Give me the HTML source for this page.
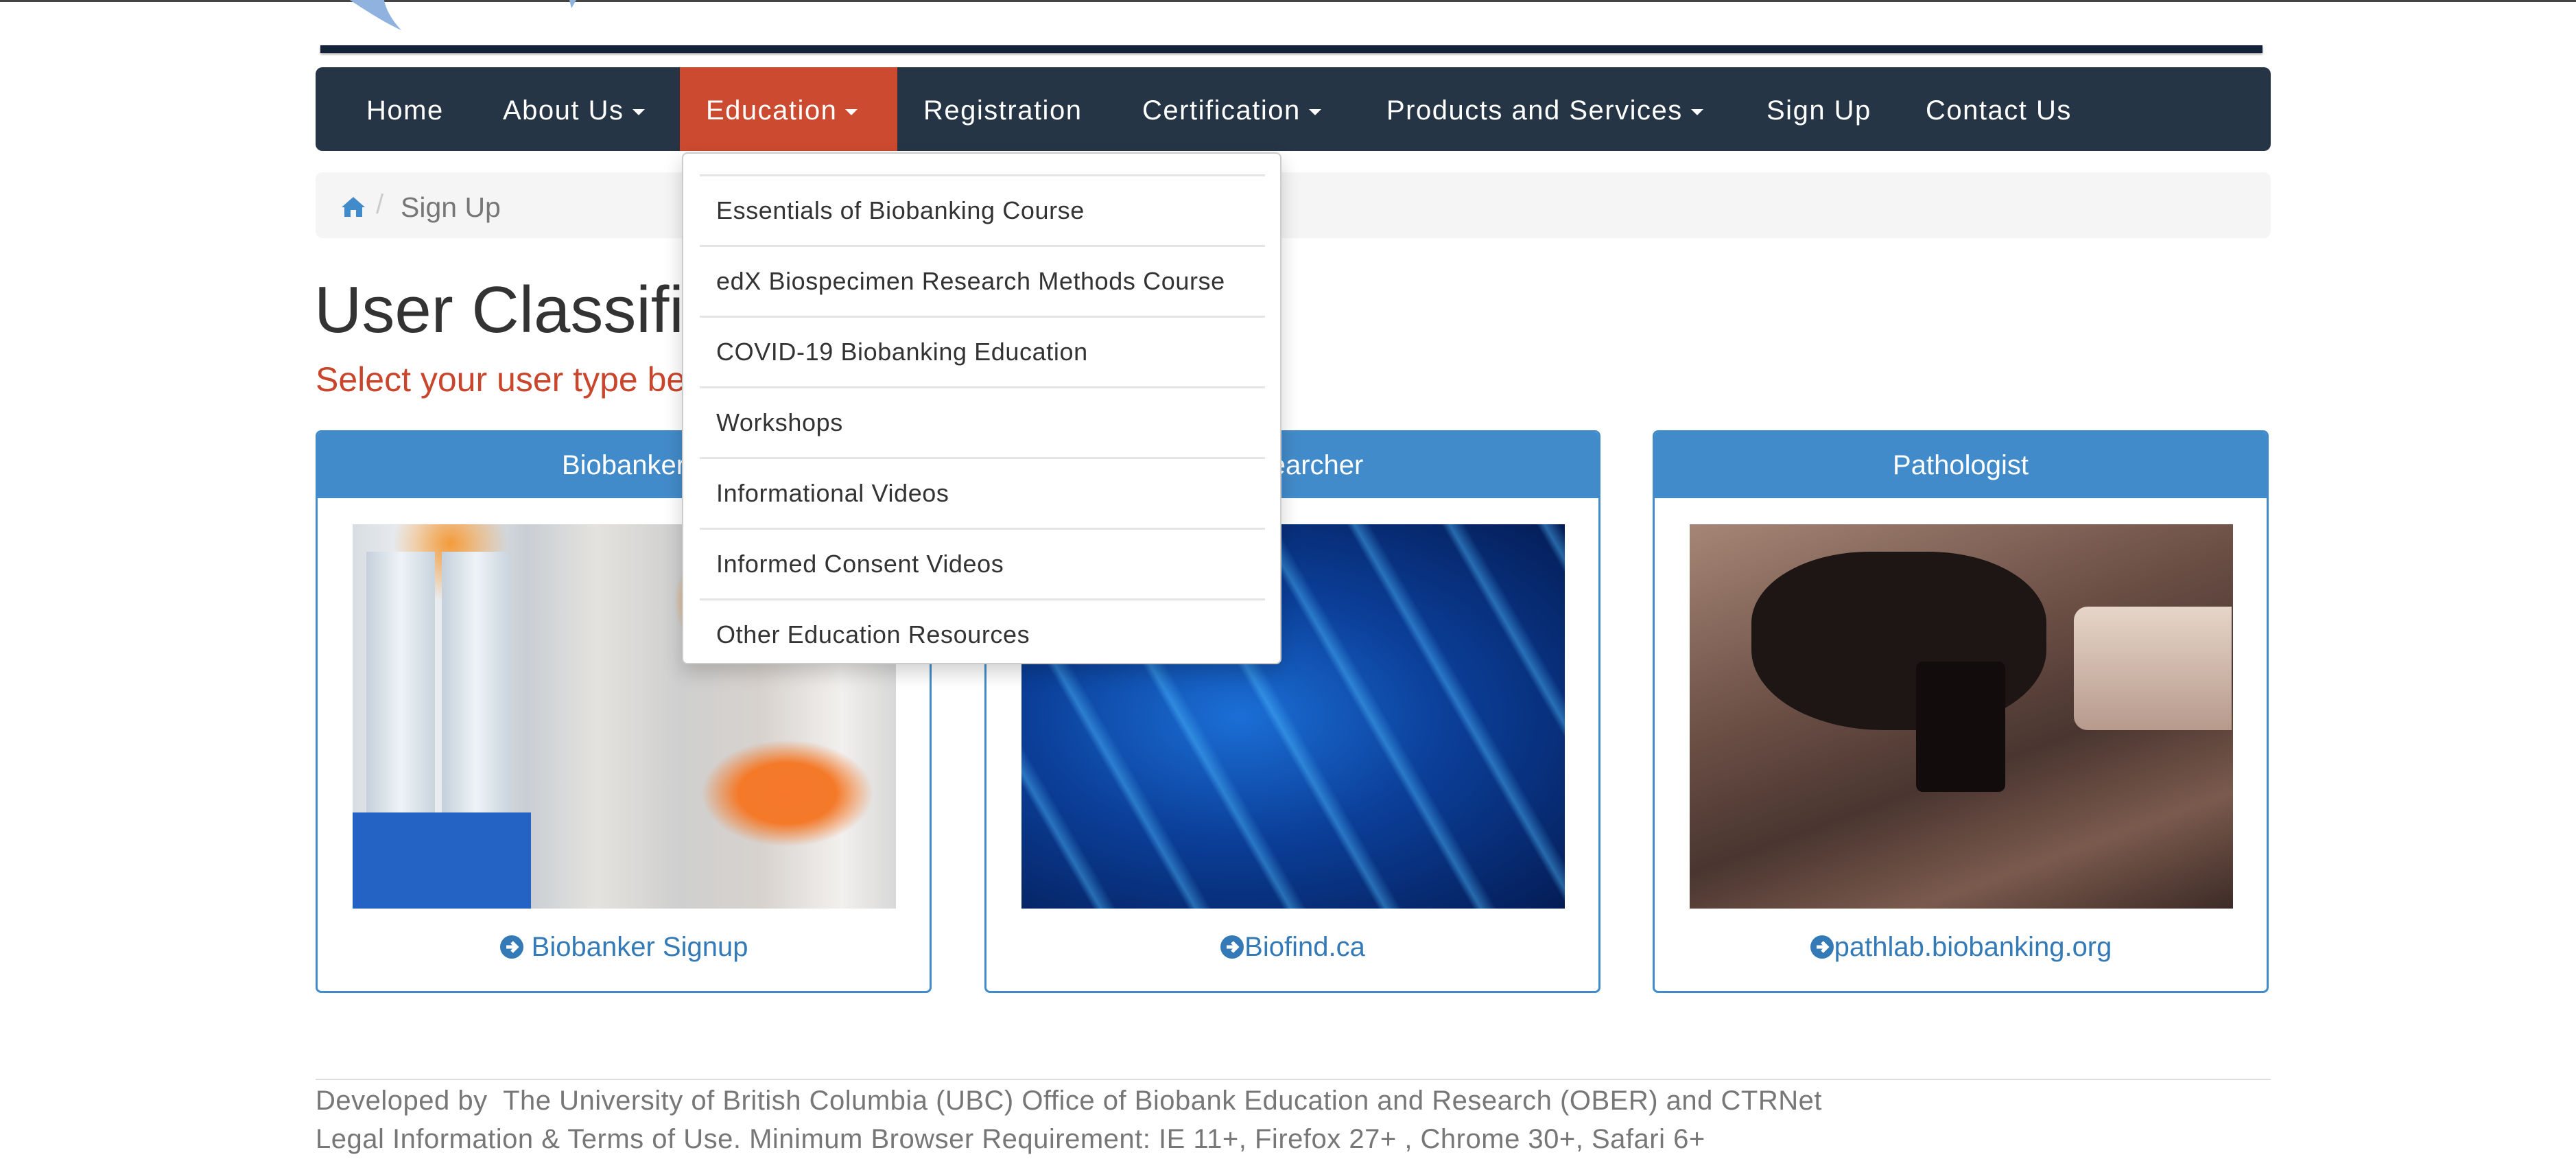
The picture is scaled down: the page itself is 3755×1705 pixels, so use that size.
<!DOCTYPE html>
<html><head><meta charset="utf-8"><style>
*{box-sizing:border-box;margin:0;padding:0}
body{width:3755px;height:1705px;background:#fff;position:relative;overflow:hidden;font-family:"Liberation Sans",sans-serif}
.a{position:absolute;white-space:nowrap}
.nav{left:460px;top:98px;width:2850px;height:122px;background:#263545;border-radius:10px}
.ni{top:100px;height:122px;line-height:122px;color:#fff;font-size:40px;letter-spacing:1.5px}
.car{display:inline-block;border-left:9px solid transparent;border-right:9px solid transparent;border-top:9px solid #fff;vertical-align:middle;margin-left:12px}
.card{width:898px;height:820px;top:627px;border:3px solid #428bca;border-radius:8px;overflow:hidden}
.ch{height:96px;background:#428bca;color:#fff;font-size:40px;text-align:center;line-height:96px}
.img{position:absolute;left:51px;top:134px;width:792px;height:560px}
.lk{position:absolute;left:0;width:100%;top:728px;text-align:center;color:#337ab7;font-size:40px}
.lk svg{vertical-align:-5px}
.dd{left:994px;top:222px;width:874px;height:746px;background:#fff;border:2px solid #ccc;border-radius:8px;box-shadow:0 12px 28px rgba(0,0,0,.18);z-index:5}
.di{position:absolute;left:24px;width:824px;border-top:3px solid #e5e5e5;height:103px;line-height:100px;padding-left:24px;font-size:36px;color:#333;letter-spacing:.6px}
.fi{font-size:40px;color:#777;letter-spacing:.5px}
</style></head><body>
<div class="a" style="left:0;top:0;width:3755px;height:3px;background:#444"></div>
<svg class="a" style="left:510px;top:0" width="330" height="50" viewBox="0 0 330 50"><path d="M0 0 C30 20 55 35 75 44 C60 28 52 12 50 0 Z" fill="#8fb3de"/><path d="M320 0 L330 0 L323 12 Z" fill="#8fb3de"/></svg>
<div class="a" style="left:467px;top:66px;width:2831px;height:11px;background:#13243a;box-shadow:0 2px 3px #999"></div>
<div class="a nav"></div>
<div class="a ni" style="left:991px;top:98px;width:317px;background:#cc4a2f"></div>
<div class="a ni" style="left:534px">Home</div>
<div class="a ni" style="left:733px">About Us<span class="car"></span></div>
<div class="a ni" style="left:1029px">Education<span class="car"></span></div>
<div class="a ni" style="left:1346px">Registration</div>
<div class="a ni" style="left:1665px">Certification<span class="car"></span></div>
<div class="a ni" style="left:2021px">Products and Services<span class="car"></span></div>
<div class="a ni" style="left:2575px">Sign Up</div>
<div class="a ni" style="left:2807px">Contact Us</div>
<div class="a" style="left:460px;top:251px;width:2850px;height:96px;background:#f5f5f5;border-radius:10px"></div>
<svg class="a" style="left:496px;top:285px" width="38" height="32" viewBox="0 0 38 32"><path d="M19 2 L2 17 L6 17 L6 31 L15 31 L15 21 L23 21 L23 31 L32 31 L32 17 L36 17 Z" fill="#428bca"/></svg>
<div class="a" style="left:548px;top:276px;font-size:40px;color:#ccc">/</div>
<div class="a" style="left:584px;top:279px;font-size:41px;color:#777">Sign Up</div>
<div class="a" style="left:458px;top:397px;font-size:96px;color:#333">User Classification</div>
<div class="a" style="left:460px;top:524px;font-size:50px;color:#c9452c">Select your user type below</div>
<div class="a card" style="left:460px"><div class="ch">Biobanker</div>
<div class="img" style="background:linear-gradient(90deg,#d8dde2 0%,#eef1f4 12%,#dfe4e8 22%,#c9ced4 32%,#e4e2de 45%,#cfcfcf 60%,#d7d2ce 75%,#f2f0ee 90%,#d8d8d8 100%)">
<div style="position:absolute;left:0;top:0;width:100%;height:100%;background:radial-gradient(circle at 70% 20%,#f79a2a 0,#f79a2a 7%,transparent 12%),radial-gradient(circle at 18% 5%,#f49b3a 0,transparent 10%),radial-gradient(ellipse at 80% 70%,#f7772b 0,#f47a2a 8%,transparent 14%)"></div>
<div style="position:absolute;left:20px;top:40px;width:100px;height:520px;background:linear-gradient(90deg,#c5d0db,#eef3f7,#c9d4de)"></div>
<div style="position:absolute;left:130px;top:40px;width:100px;height:520px;background:linear-gradient(90deg,#c5d0db,#eef3f7,#c9d4de)"></div>
<div style="position:absolute;left:0;top:420px;width:260px;height:140px;background:#2463c4"></div></div>
<div class="lk"><svg width="36" height="36" viewBox="0 0 36 36"><circle cx="18" cy="18" r="17" fill="#337ab7"/><path d="M10 18 H24 M18 11 L25 18 L18 25" stroke="#fff" stroke-width="5" fill="none"/></svg> Biobanker Signup</div></div>
<div class="a card" style="left:1435px"><div class="ch">Researcher</div>
<div class="img" style="background:radial-gradient(ellipse at 40% 50%,#1b6fd6 0,#0b3f99 45%,#041c55 100%)">
<div style="position:absolute;inset:0;background:repeating-linear-gradient(60deg,transparent 0,transparent 90px,rgba(80,190,255,.45) 100px,transparent 120px)"></div></div>
<div class="lk"><svg width="36" height="36" viewBox="0 0 36 36"><circle cx="18" cy="18" r="17" fill="#337ab7"/><path d="M10 18 H24 M18 11 L25 18 L18 25" stroke="#fff" stroke-width="5" fill="none"/></svg>Biofind.ca</div></div>
<div class="a card" style="left:2409px"><div class="ch">Pathologist</div>
<div class="img" style="background:linear-gradient(160deg,#a58676 0%,#6f5248 35%,#4a3530 60%,#7a5a4d 80%,#3d2b27 100%)">
<div style="position:absolute;left:90px;top:40px;width:430px;height:260px;background:#1e1614;border-radius:40% 40% 45% 45%"></div>
<div style="position:absolute;left:330px;top:200px;width:130px;height:190px;background:#120d0c;border-radius:10px"></div>
<div style="position:absolute;left:560px;top:120px;width:230px;height:180px;background:linear-gradient(#e6d5c9,#b79a8c);border-radius:20px 0 0 20px"></div></div>
<div class="lk"><svg width="36" height="36" viewBox="0 0 36 36"><circle cx="18" cy="18" r="17" fill="#337ab7"/><path d="M10 18 H24 M18 11 L25 18 L18 25" stroke="#fff" stroke-width="5" fill="none"/></svg>pathlab.biobanking.org</div></div>
<div class="a dd">
<div class="di" style="top:30px">Essentials of Biobanking Course</div>
<div class="di" style="top:133px">edX Biospecimen Research Methods Course</div>
<div class="di" style="top:236px">COVID-19 Biobanking Education</div>
<div class="di" style="top:339px">Workshops</div>
<div class="di" style="top:442px">Informational Videos</div>
<div class="di" style="top:545px">Informed Consent Videos</div>
<div class="di" style="top:648px">Other Education Resources</div>
</div>
<div class="a" style="left:460px;top:1572px;width:2850px;height:2px;background:#ddd"></div>
<div class="a fi" style="left:460px;top:1582px">Developed by&nbsp; The University of British Columbia (UBC) Office of Biobank Education and Research (OBER) and CTRNet</div>
<div class="a fi" style="left:460px;top:1638px">Legal Information &amp; Terms of Use. Minimum Browser Requirement: IE 11+, Firefox 27+ , Chrome 30+, Safari 6+</div>
</body></html>
